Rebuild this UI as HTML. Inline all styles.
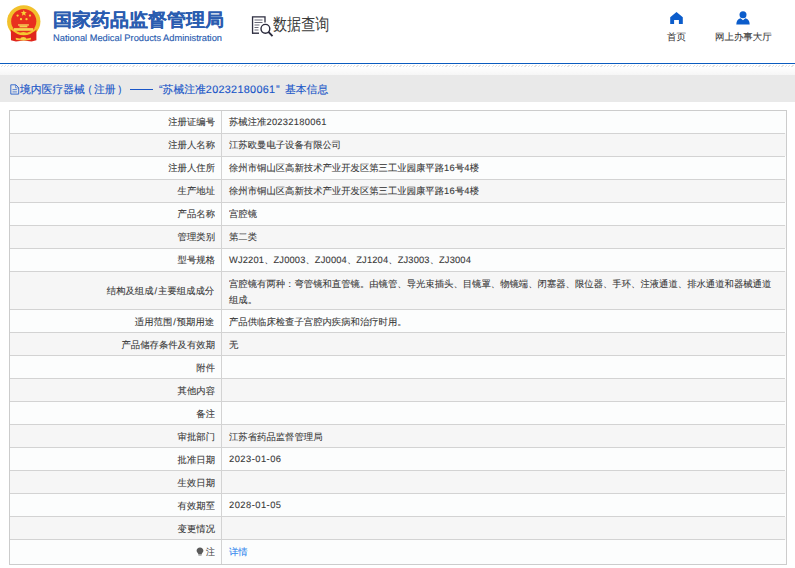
<!DOCTYPE html>
<html><head><meta charset="utf-8">
<style>
html,body{margin:0;padding:0;background:#fff;}
body{width:795px;height:568px;overflow:hidden;position:relative;font-family:"Liberation Sans",sans-serif;}
.a{position:absolute;box-sizing:border-box;}
.t{position:absolute;font-size:40.0px;line-height:40.0px;white-space:nowrap;text-rendering:geometricPrecision;}
</style></head><body>
<svg class="a" style="left:0px;top:0px" width="48" height="46" viewBox="0 0 48 46">
  <ellipse cx="23.75" cy="21.5" rx="16.7" ry="16.3" fill="#f2c12c"/>
  <path d="M10.8 28.5 L36.4 28.5 L36.4 40.2 L31.5 41.6 L23.7 40.6 L16 41.6 L11 40.2 Z" fill="#e0261c"/>
  <ellipse cx="23.75" cy="21.2" rx="12.6" ry="12.3" fill="#e8301f"/>
  <path d="M10.2 27.5 Q23.75 41 37.3 27.5" fill="none" stroke="#f4c42c" stroke-width="2"/>
  <polygon points="23.8,10.1 24.6,12.1 26.8,12.2 25.1,13.6 25.7,15.7 23.8,14.5 21.9,15.7 22.5,13.6 20.8,12.2 23,12.1" fill="#f8d436"/>
  <circle cx="17.6" cy="15.6" r="1.15" fill="#f8d436"/>
  <circle cx="30" cy="15.6" r="1.15" fill="#f8d436"/>
  <circle cx="21" cy="19.2" r="1.15" fill="#f8d436"/>
  <circle cx="26.5" cy="19.2" r="1.15" fill="#f8d436"/>
  <rect x="18" y="24.3" width="10.9" height="1.3" fill="#f6d45c"/>
  <rect x="19.5" y="25.5" width="7.9" height="1.9" fill="#f3cf50"/>
  <rect x="13.9" y="28.1" width="19.3" height="2.7" fill="#f5d450"/>
  <ellipse cx="23.4" cy="33.5" rx="3.4" ry="1.5" fill="#f4c830"/>
  <path d="M15.7 37.8 Q23.5 39.6 31 37.8 L30.8 39.8 Q23.5 41.2 15.9 39.8 Z" fill="#f4c830"/>
  <ellipse cx="23.3" cy="38.6" rx="2.9" ry="1.5" fill="#f7d040"/>
</svg>
<div class="t" style="left:52.525px;top:10.701px;color:#2a5cb0;font-weight:bold;transform:scale(0.47500,0.45125);transform-origin:0 0;-webkit-text-stroke:0.7px #2a5cb0;">国家药品监督管理局</div><div class="t" style="left:52.5px;top:33.27px;color:#2a5cb0;transform:scale(0.23250);transform-origin:0 0;-webkit-text-stroke:0.6px #2a5cb0">National Medical Products Administration</div><div class="t" style="left:272.947px;top:16.151px;color:#3b3b3b;font-weight:normal;transform:scale(0.35250,0.42300);transform-origin:0 0;">数据查询</div><div class="t" style="left:666.763px;top:31.769px;color:#3a3a3a;font-weight:normal;transform:scale(0.23750,0.23750);transform-origin:0 0;-webkit-text-stroke:0.4px #3a3a3a;">首页</div><div class="t" style="left:715.464px;top:31.793px;color:#3a3a3a;font-weight:normal;transform:scale(0.23625,0.23625);transform-origin:0 0;-webkit-text-stroke:0.4px #3a3a3a;">网上办事大厅</div>
<svg class="a" style="left:251px;top:15px" width="24" height="24" viewBox="0 0 24 24">
  <path d="M1.55 18.6 V1.8 H14 V7.4" fill="none" stroke="#2e2e40" stroke-width="1.3"/>
  <path d="M1 18.2 H8" stroke="#2e2e40" stroke-width="1.4"/>
  <path d="M3.5 5 H11.5 M3.5 7.5 H11.5 M3.5 10 H8.5 M3.5 12.5 H7.5 M3.5 15 H7.5" stroke="#6a6a78" stroke-width="1"/>
  <circle cx="14.4" cy="13.8" r="4.4" fill="none" stroke="#2a2a3c" stroke-width="1.4"/>
  <path d="M17.4 16.9 L21.5 21.1" stroke="#2a2a3c" stroke-width="1.9"/>
</svg>
<svg class="a" style="left:670px;top:12px" width="13" height="12" viewBox="0 0 13 12">
  <path d="M6.5 0 L12.8 5.3 V12 H8.9 V8 H4.1 V12 H0.2 V5.3 Z" fill="#0b5ccb"/>
</svg>
<svg class="a" style="left:736.3px;top:11px" width="14" height="14" viewBox="0 0 14 14">
  <circle cx="7" cy="3.7" r="3.5" fill="#0b5ccb"/>
  <path d="M0.3 13.5 Q0.5 8.2 4.6 7.3 L7 9.3 L9.4 7.3 Q13.5 8.2 13.7 13.5 Z" fill="#0b5ccb"/>
</svg>
<div class="a" style="left:0;top:62.8px;width:795px;height:1.2px;background:#0b5cbf"></div>
<div class="a" style="left:0;top:65px;width:795px;height:2px;background-image:repeating-linear-gradient(135deg, transparent 0, transparent 1.45px, #e2e2e2 1.45px, #e2e2e2 2.33px);"></div>
<div class="a" style="left:0;top:67px;width:795px;height:7.900000000000006px;background:linear-gradient(#fff,#f6f6f6)"></div>
<div class="a" style="left:0;top:74.9px;width:795px;height:27.1px;background:#e9e9e9"></div>
<svg class="a" style="left:10px;top:83.5px" width="10" height="11" viewBox="0 0 10 11">
  <path d="M0.8 0.8 H5.8 L8.7 3.7 V10.1 H0.8 Z" fill="none" stroke="#1a56c8" stroke-width="0.85"/>
  <path d="M5.6 1 V3.9 H8.5" fill="none" stroke="#1a56c8" stroke-width="0.6"/>
  <path d="M2.5 5.6 H6.9 M2.5 7.9 H6.9" stroke="#1a56c8" stroke-width="0.7"/>
</svg>
<div class="t" style="left:19.730px;top:83.685px;color:#1a56c8;font-weight:normal;transform:scale(0.27000,0.27000);transform-origin:0 0;-webkit-text-stroke:0.5px #1a56c8;">境内医疗器械</div><div class="t" style="left:81.630px;top:83.685px;color:#1a56c8;font-weight:normal;transform:scale(0.27000,0.27000);transform-origin:0 0;-webkit-text-stroke:0.5px #1a56c8;">（</div><div class="t" style="left:94.430px;top:83.685px;color:#1a56c8;font-weight:normal;transform:scale(0.27000,0.27000);transform-origin:0 0;-webkit-text-stroke:0.5px #1a56c8;">注册</div><div class="t" style="left:116.730px;top:83.685px;color:#1a56c8;font-weight:normal;transform:scale(0.27000,0.27000);transform-origin:0 0;-webkit-text-stroke:0.5px #1a56c8;">）</div><div class="a" style="left:129.5px;top:88.6px;width:23.3px;height:1px;background:#1a56c8"></div><div class="t" style="left:159.030px;top:83.685px;color:#1a56c8;font-weight:normal;transform:scale(0.27000,0.27000);transform-origin:0 0;-webkit-text-stroke:0.5px #1a56c8;">“苏械注准<span style="letter-spacing:1.2px">20232180061</span></div><div class="t" style="left:275.730px;top:83.685px;color:#1a56c8;font-weight:normal;transform:scale(0.27000,0.27000);transform-origin:0 0;-webkit-text-stroke:0.5px #1a56c8;">”</div><div class="t" style="left:285.230px;top:83.685px;color:#1a56c8;font-weight:normal;transform:scale(0.27000,0.27000);transform-origin:0 0;-webkit-text-stroke:0.5px #1a56c8;">基本信息</div>
<div class="a" style="left:9.6px;top:110.400px;width:776.6px;height:23.000px;background:#fcfdfd"></div>
<div class="a" style="left:9.6px;top:133.400px;width:776.6px;height:23.000px;background:#f6f6f6"></div>
<div class="a" style="left:9.6px;top:156.400px;width:776.6px;height:23.000px;background:#fcfdfd"></div>
<div class="a" style="left:9.6px;top:179.400px;width:776.6px;height:23.000px;background:#f6f6f6"></div>
<div class="a" style="left:9.6px;top:202.400px;width:776.6px;height:23.000px;background:#fcfdfd"></div>
<div class="a" style="left:9.6px;top:225.400px;width:776.6px;height:23.000px;background:#f6f6f6"></div>
<div class="a" style="left:9.6px;top:248.400px;width:776.6px;height:23.000px;background:#fcfdfd"></div>
<div class="a" style="left:9.6px;top:271.400px;width:776.6px;height:38.200px;background:#f6f6f6"></div>
<div class="a" style="left:9.6px;top:309.600px;width:776.6px;height:23.000px;background:#fcfdfd"></div>
<div class="a" style="left:9.6px;top:332.600px;width:776.6px;height:23.000px;background:#f6f6f6"></div>
<div class="a" style="left:9.6px;top:355.600px;width:776.6px;height:23.000px;background:#fcfdfd"></div>
<div class="a" style="left:9.6px;top:378.600px;width:776.6px;height:23.000px;background:#f6f6f6"></div>
<div class="a" style="left:9.6px;top:401.600px;width:776.6px;height:23.000px;background:#fcfdfd"></div>
<div class="a" style="left:9.6px;top:424.600px;width:776.6px;height:23.000px;background:#f6f6f6"></div>
<div class="a" style="left:9.6px;top:447.600px;width:776.6px;height:23.000px;background:#fcfdfd"></div>
<div class="a" style="left:9.6px;top:470.600px;width:776.6px;height:23.000px;background:#f6f6f6"></div>
<div class="a" style="left:9.6px;top:493.600px;width:776.6px;height:23.000px;background:#fcfdfd"></div>
<div class="a" style="left:9.6px;top:516.600px;width:776.6px;height:23.000px;background:#f6f6f6"></div>
<div class="a" style="left:9.6px;top:539.600px;width:776.6px;height:24.500px;background:#fcfdfd"></div>
<div class="a" style="left:9.6px;top:132.900px;width:775.40px;height:1px;background:#d3d3d3"></div>
<div class="a" style="left:9.6px;top:155.900px;width:775.40px;height:1px;background:#d3d3d3"></div>
<div class="a" style="left:9.6px;top:178.900px;width:775.40px;height:1px;background:#d3d3d3"></div>
<div class="a" style="left:9.6px;top:201.900px;width:775.40px;height:1px;background:#d3d3d3"></div>
<div class="a" style="left:9.6px;top:224.900px;width:775.40px;height:1px;background:#d3d3d3"></div>
<div class="a" style="left:9.6px;top:247.900px;width:775.40px;height:1px;background:#d3d3d3"></div>
<div class="a" style="left:9.6px;top:270.900px;width:775.40px;height:1px;background:#d3d3d3"></div>
<div class="a" style="left:9.6px;top:309.100px;width:775.40px;height:1px;background:#d3d3d3"></div>
<div class="a" style="left:9.6px;top:332.100px;width:775.40px;height:1px;background:#d3d3d3"></div>
<div class="a" style="left:9.6px;top:355.100px;width:775.40px;height:1px;background:#d3d3d3"></div>
<div class="a" style="left:9.6px;top:378.100px;width:775.40px;height:1px;background:#d3d3d3"></div>
<div class="a" style="left:9.6px;top:401.100px;width:775.40px;height:1px;background:#d3d3d3"></div>
<div class="a" style="left:9.6px;top:424.100px;width:775.40px;height:1px;background:#d3d3d3"></div>
<div class="a" style="left:9.6px;top:447.100px;width:775.40px;height:1px;background:#d3d3d3"></div>
<div class="a" style="left:9.6px;top:470.100px;width:775.40px;height:1px;background:#d3d3d3"></div>
<div class="a" style="left:9.6px;top:493.100px;width:775.40px;height:1px;background:#d3d3d3"></div>
<div class="a" style="left:9.6px;top:516.100px;width:775.40px;height:1px;background:#d3d3d3"></div>
<div class="a" style="left:9.6px;top:539.100px;width:775.40px;height:1px;background:#d3d3d3"></div>
<div class="a" style="left:220.900px;top:110.4px;width:1px;height:453.700px;background:#d3d3d3"></div>
<div class="a" style="left:9.000px;top:109.800px;width:777.800px;height:454.900px;border:1.2px solid #cccccc;border-right-width:1.6px;border-bottom-width:1.6px"></div>
<div class="t" style="right:580.499px;top:117.342px;color:#383838;font-weight:normal;transform:scale(0.23375,0.23375);transform-origin:100% 0;-webkit-text-stroke:0.4px #383838;">注册证编号</div>
<div class="t" style="left:229.266px;top:117.342px;color:#383838;font-weight:normal;transform:scale(0.23375,0.23375);transform-origin:0 0;-webkit-text-stroke:0.4px #383838;">苏械注准<span style="letter-spacing:1.2px">20232180061</span></div>
<div class="t" style="right:580.499px;top:140.342px;color:#383838;font-weight:normal;transform:scale(0.23375,0.23375);transform-origin:100% 0;-webkit-text-stroke:0.4px #383838;">注册人名称</div>
<div class="t" style="left:229.266px;top:140.342px;color:#383838;font-weight:normal;transform:scale(0.23375,0.23375);transform-origin:0 0;-webkit-text-stroke:0.4px #383838;">江苏欧曼电子设备有限公司</div>
<div class="t" style="right:580.499px;top:163.342px;color:#383838;font-weight:normal;transform:scale(0.23375,0.23375);transform-origin:100% 0;-webkit-text-stroke:0.4px #383838;">注册人住所</div>
<div class="t" style="left:229.266px;top:163.342px;color:#383838;font-weight:normal;transform:scale(0.23375,0.23375);transform-origin:0 0;-webkit-text-stroke:0.4px #383838;">徐州市铜山区高新技术产业开发区第三工业园康平路<span style="letter-spacing:1.2px">16</span>号<span style="letter-spacing:1.2px">4</span>楼</div>
<div class="t" style="right:580.499px;top:186.342px;color:#383838;font-weight:normal;transform:scale(0.23375,0.23375);transform-origin:100% 0;-webkit-text-stroke:0.4px #383838;">生产地址</div>
<div class="t" style="left:229.266px;top:186.342px;color:#383838;font-weight:normal;transform:scale(0.23375,0.23375);transform-origin:0 0;-webkit-text-stroke:0.4px #383838;">徐州市铜山区高新技术产业开发区第三工业园康平路<span style="letter-spacing:1.2px">16</span>号<span style="letter-spacing:1.2px">4</span>楼</div>
<div class="t" style="right:580.499px;top:209.342px;color:#383838;font-weight:normal;transform:scale(0.23375,0.23375);transform-origin:100% 0;-webkit-text-stroke:0.4px #383838;">产品名称</div>
<div class="t" style="left:229.266px;top:209.342px;color:#383838;font-weight:normal;transform:scale(0.23375,0.23375);transform-origin:0 0;-webkit-text-stroke:0.4px #383838;">宫腔镜</div>
<div class="t" style="right:580.499px;top:232.342px;color:#383838;font-weight:normal;transform:scale(0.23375,0.23375);transform-origin:100% 0;-webkit-text-stroke:0.4px #383838;">管理类别</div>
<div class="t" style="left:229.266px;top:232.342px;color:#383838;font-weight:normal;transform:scale(0.23375,0.23375);transform-origin:0 0;-webkit-text-stroke:0.4px #383838;">第二类</div>
<div class="t" style="right:580.499px;top:255.342px;color:#383838;font-weight:normal;transform:scale(0.23375,0.23375);transform-origin:100% 0;-webkit-text-stroke:0.4px #383838;">型号规格</div>
<div class="t" style="left:229.266px;top:255.342px;color:#383838;font-weight:normal;transform:scale(0.23375,0.23375);transform-origin:0 0;-webkit-text-stroke:0.4px #383838;"><span style="letter-spacing:0.6px">WJ2201</span>、<span style="letter-spacing:0.6px">ZJ0003</span>、<span style="letter-spacing:0.6px">ZJ0004</span>、<span style="letter-spacing:0.6px">ZJ1204</span>、<span style="letter-spacing:0.6px">ZJ3003</span>、<span style="letter-spacing:0.6px">ZJ3004</span></div>
<div class="t" style="right:580.499px;top:285.942px;color:#383838;font-weight:normal;transform:scale(0.23375,0.23375);transform-origin:100% 0;-webkit-text-stroke:0.4px #383838;">结构及组成<span style="margin:0 4px">/</span>主要组成成分</div>
<div class="t" style="left:229.266px;top:278.692px;color:#383838;font-weight:normal;transform:scale(0.23375,0.23375);transform-origin:0 0;-webkit-text-stroke:0.4px #383838;">宫腔镜有两种：弯管镜和直管镜。由镜管、导光束插头、目镜罩、物镜端、闭塞器、限位器、手环、注液通道、排水通道和器械通道</div>
<div class="t" style="left:229.266px;top:294.992px;color:#383838;font-weight:normal;transform:scale(0.23375,0.23375);transform-origin:0 0;-webkit-text-stroke:0.4px #383838;">组成。</div>
<div class="t" style="right:580.499px;top:316.542px;color:#383838;font-weight:normal;transform:scale(0.23375,0.23375);transform-origin:100% 0;-webkit-text-stroke:0.4px #383838;">适用范围<span style="margin:0 4px">/</span>预期用途</div>
<div class="t" style="left:229.266px;top:316.542px;color:#383838;font-weight:normal;transform:scale(0.23375,0.23375);transform-origin:0 0;-webkit-text-stroke:0.4px #383838;">产品供临床检查子宫腔内疾病和治疗时用。</div>
<div class="t" style="right:580.499px;top:339.542px;color:#383838;font-weight:normal;transform:scale(0.23375,0.23375);transform-origin:100% 0;-webkit-text-stroke:0.4px #383838;">产品储存条件及有效期</div>
<div class="t" style="left:229.266px;top:339.542px;color:#383838;font-weight:normal;transform:scale(0.23375,0.23375);transform-origin:0 0;-webkit-text-stroke:0.4px #383838;">无</div>
<div class="t" style="right:580.499px;top:362.542px;color:#383838;font-weight:normal;transform:scale(0.23375,0.23375);transform-origin:100% 0;-webkit-text-stroke:0.4px #383838;">附件</div>
<div class="t" style="right:580.499px;top:385.542px;color:#383838;font-weight:normal;transform:scale(0.23375,0.23375);transform-origin:100% 0;-webkit-text-stroke:0.4px #383838;">其他内容</div>
<div class="t" style="right:580.499px;top:408.542px;color:#383838;font-weight:normal;transform:scale(0.23375,0.23375);transform-origin:100% 0;-webkit-text-stroke:0.4px #383838;">备注</div>
<div class="t" style="right:580.499px;top:431.542px;color:#383838;font-weight:normal;transform:scale(0.23375,0.23375);transform-origin:100% 0;-webkit-text-stroke:0.4px #383838;">审批部门</div>
<div class="t" style="left:229.266px;top:431.542px;color:#383838;font-weight:normal;transform:scale(0.23375,0.23375);transform-origin:0 0;-webkit-text-stroke:0.4px #383838;">江苏省药品监督管理局</div>
<div class="t" style="right:580.499px;top:454.542px;color:#383838;font-weight:normal;transform:scale(0.23375,0.23375);transform-origin:100% 0;-webkit-text-stroke:0.4px #383838;">批准日期</div>
<div class="t" style="left:229.266px;top:454.042px;color:#383838;font-weight:normal;transform:scale(0.23375,0.23375);transform-origin:0 0;-webkit-text-stroke:0.4px #383838;"><span style="letter-spacing:2.0px">2023-01-06</span></div>
<div class="t" style="right:580.499px;top:477.542px;color:#383838;font-weight:normal;transform:scale(0.23375,0.23375);transform-origin:100% 0;-webkit-text-stroke:0.4px #383838;">生效日期</div>
<div class="t" style="right:580.499px;top:500.542px;color:#383838;font-weight:normal;transform:scale(0.23375,0.23375);transform-origin:100% 0;-webkit-text-stroke:0.4px #383838;">有效期至</div>
<div class="t" style="left:229.266px;top:500.042px;color:#383838;font-weight:normal;transform:scale(0.23375,0.23375);transform-origin:0 0;-webkit-text-stroke:0.4px #383838;"><span style="letter-spacing:2.0px">2028-01-05</span></div>
<div class="t" style="right:580.499px;top:523.542px;color:#383838;font-weight:normal;transform:scale(0.23375,0.23375);transform-origin:100% 0;-webkit-text-stroke:0.4px #383838;">变更情况</div>
<div class="t" style="right:580.499px;top:546.542px;color:#383838;font-weight:normal;transform:scale(0.23375,0.23375);transform-origin:100% 0;">注</div>
<svg class="a" style="left:195.92px;top:546.80px" width="8" height="9" viewBox="0 0 8 9"><path d="M4 0.4C2 0.4 0.6 1.8 0.6 3.6c0 1.3 0.8 2.1 1.3 2.7 0.3 0.35 0.4 0.6 0.4 1.1h3.4c0-0.5 0.1-0.75 0.4-1.1 0.5-0.6 1.3-1.4 1.3-2.7C7.4 1.8 6 0.4 4 0.4z" fill="#5a5a5a"/><rect x="2.4" y="7.7" width="3.2" height="1" fill="#9a9a9a"/></svg>
<div class="t" style="left:229.266px;top:546.542px;color:#2f86ee;font-weight:normal;transform:scale(0.23375,0.23375);transform-origin:0 0;-webkit-text-stroke:0.4px #2f86ee;">详情</div>
</body></html>
